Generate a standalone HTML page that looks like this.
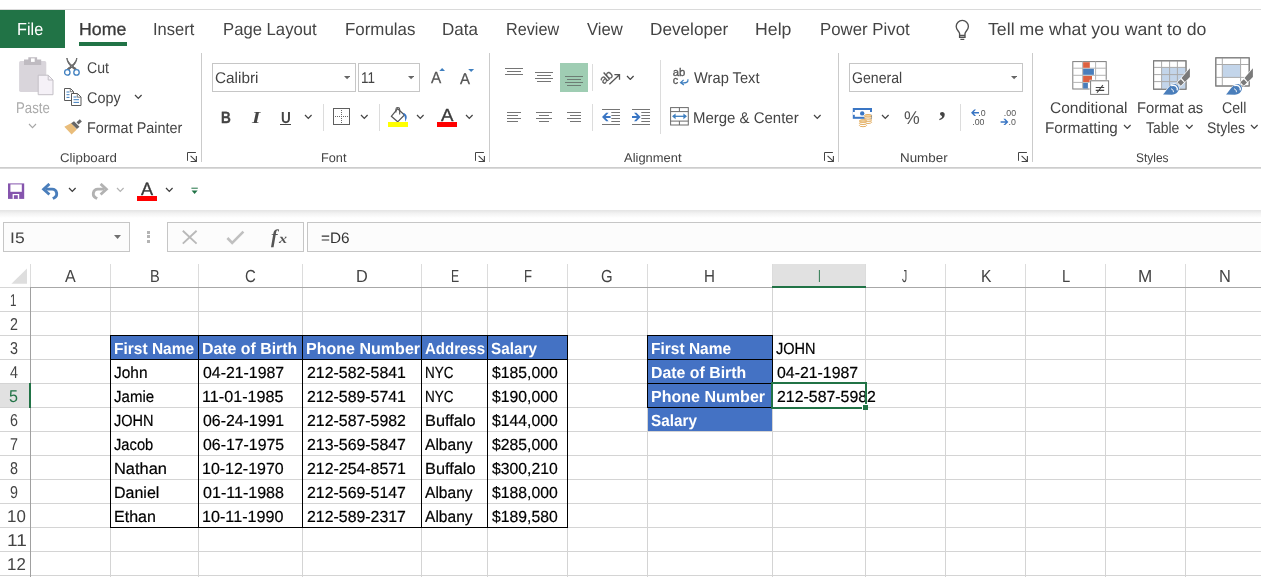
<!DOCTYPE html>
<html><head><meta charset="utf-8"><title>Excel</title>
<style>
html,body{margin:0;padding:0;background:#fff;}
body{width:1261px;height:577px;overflow:hidden;position:relative;font-family:"Liberation Sans", sans-serif;}
#app{position:absolute;left:0;top:0;width:1261px;height:577px;will-change:transform;}
.r{position:absolute;box-sizing:content-box;display:block;}
.t{position:absolute;white-space:pre;line-height:20px;transform-origin:0 0;font-family:"Liberation Sans", sans-serif;}
</style></head><body><div id="app">
<div class="r" style="left:0px;top:9px;width:1261px;height:1px;background:#dadada;"></div>
<div class="r" style="left:0px;top:10px;width:65px;height:38px;background:#217346;"></div>
<span class="t" style="left:17.47px;top:19.00px;font-size:17.4px;color:#fff;transform:scaleX(0.9346) skewX(0.05deg);">File</span>
<span class="t" style="left:78.88px;top:19.00px;font-size:17.4px;color:#3a3a3a;transform:scaleX(1.0200) skewX(0.05deg);-webkit-text-stroke:0.3px #3a3a3a;">Home</span>
<div class="r" style="left:79px;top:42px;width:48px;height:4px;background:#217346;"></div>
<span class="t" style="left:153.15px;top:19.00px;font-size:17.4px;color:#444;transform:scaleX(0.9488) skewX(0.05deg);">Insert</span>
<span class="t" style="left:223.14px;top:19.00px;font-size:17.4px;color:#444;transform:scaleX(0.9588) skewX(0.05deg);">Page Layout</span>
<span class="t" style="left:344.53px;top:19.00px;font-size:17.4px;color:#444;transform:scaleX(0.9704) skewX(0.05deg);">Formulas</span>
<span class="t" style="left:441.52px;top:19.00px;font-size:17.4px;color:#444;transform:scaleX(0.9778) skewX(0.05deg);">Data</span>
<span class="t" style="left:505.57px;top:19.00px;font-size:17.4px;color:#444;transform:scaleX(0.9321) skewX(0.05deg);">Review</span>
<span class="t" style="left:587.30px;top:19.00px;font-size:17.4px;color:#444;transform:scaleX(0.9579) skewX(0.05deg);">View</span>
<span class="t" style="left:650.11px;top:19.00px;font-size:17.4px;color:#444;transform:scaleX(0.9872) skewX(0.05deg);">Developer</span>
<span class="t" style="left:755.48px;top:19.00px;font-size:17.4px;color:#444;transform:scaleX(1.0176) skewX(0.05deg);">Help</span>
<span class="t" style="left:819.53px;top:19.00px;font-size:17.4px;color:#444;transform:scaleX(0.9663) skewX(0.05deg);">Power Pivot</span>
<span class="t" style="left:988.20px;top:19.00px;font-size:17.4px;color:#444;transform:scaleX(1.0173) skewX(0.05deg);">Tell me what you want to do</span>
<svg class="r" style="left:953px;top:19px" width="20" height="23" viewBox="0 0 20 23"><path d="M6.6 14.6 C6.4 12.4 3.2 11 3.2 7.5 A6.1 6.1 0 0 1 15.4 7.5 C15.4 11 12.2 12.4 12 14.6 M6.6 14.4 V18.2 H12 V14.4 M6.6 16.4 H12" fill="none" stroke="#505050" stroke-width="1.35"/><path d="M7.4 20.4 H11.3" stroke="#505050" stroke-width="1.2"/></svg>
<div class="r" style="left:201px;top:53px;width:1px;height:109px;background:#cbcbcb;"></div>
<div class="r" style="left:489px;top:53px;width:1px;height:109px;background:#cbcbcb;"></div>
<div class="r" style="left:838px;top:53px;width:1px;height:109px;background:#cbcbcb;"></div>
<div class="r" style="left:1032px;top:53px;width:1px;height:109px;background:#cbcbcb;"></div>
<div class="r" style="left:0px;top:167px;width:1261px;height:1px;background:#cdcdcd;"></div>
<div class="r" style="left:0px;top:168px;width:1261px;height:1px;background:#dadada;"></div>
<div class="r" style="left:323px;top:104px;width:1px;height:27px;background:#dcdcdc;"></div>
<div class="r" style="left:379px;top:104px;width:1px;height:27px;background:#dcdcdc;"></div>
<div class="r" style="left:592px;top:64px;width:1px;height:27px;background:#dcdcdc;"></div>
<div class="r" style="left:592px;top:104px;width:1px;height:27px;background:#dcdcdc;"></div>
<div class="r" style="left:660px;top:60px;width:1px;height:74px;background:#dcdcdc;"></div>
<div class="r" style="left:960px;top:104px;width:1px;height:27px;background:#dcdcdc;"></div>
<svg class="r" style="left:18px;top:56px" width="37" height="40" viewBox="0 0 37 40"><rect x="1.1" y="5.1" width="27.2" height="30.8" rx="1.6" fill="#d9d5db"/>
<path d="M6 3.6 H10.3 V1.3 H19.1 V3.6 H23.2 V9 H6z" fill="#bfbbc1"/><rect x="13" y="2.4" width="3.7" height="3.5" fill="#fff"/>
<path d="M20.2 19.2 h10 l4.8 4.8 v14.7 h-14.8z" fill="#f5f1f7" stroke="#c3bfc6" stroke-width="1"/><path d="M30.2 19.2 v4.8 h4.8" fill="none" stroke="#c3bfc6"/></svg>
<span class="t" style="left:16.05px;top:98.00px;font-size:15.5px;color:#ababab;transform:scaleX(0.8526) skewX(0.05deg);">Paste</span>
<svg class="r" style="left:28.3px;top:123.3px" width="9" height="6" viewBox="0 0 9 6"><path d="M1 1 L4.5 4.7 L8 1" fill="none" stroke="#a6a6a6" stroke-width="1.1"/></svg>
<svg class="r" style="left:63px;top:57px" width="19" height="20" viewBox="0 0 19 20"><path d="M3.9 1 C4.6 4.5 7.5 8 13.2 11.6 L11.6 12.6 C7 9 4 5.5 3.9 1z M13.8 1 C13.1 4.5 10.2 8 4.5 11.6 L6.1 12.6 C10.7 9 13.7 5.5 13.8 1z" fill="#666" stroke="#666" stroke-width="1"/>
<circle cx="4.3" cy="15.4" r="2.7" fill="none" stroke="#3f7fbf" stroke-width="1.3"/><circle cx="13.5" cy="15.4" r="2.7" fill="none" stroke="#3f7fbf" stroke-width="1.3"/></svg>
<span class="t" style="left:87.20px;top:58.00px;font-size:15.5px;color:#444;transform:scaleX(0.9083) skewX(0.05deg);">Cut</span>
<svg class="r" style="left:63px;top:87px" width="19" height="20" viewBox="0 0 19 20"><path d="M8 13.5 H1.5 V1.5 H7.5 L10.5 4.5 V6.5" fill="none" stroke="#5a5a5a" stroke-width="1"/><path d="M7.3 1.7 V4.7 H10.3" fill="none" stroke="#5a5a5a" stroke-width="0.8"/>
<path d="M3.5 5h3 M3.5 7.7h3 M3.5 10.4h3" stroke="#3f7fbf" stroke-width="1"/>
<path d="M8.5 6.5 h6 l3.5 3.5 v8.5 h-9.5z" fill="#fff" stroke="#5a5a5a" stroke-width="1"/><path d="M14.3 6.7 v3.5 h3.5" fill="none" stroke="#5a5a5a" stroke-width="0.8"/>
<path d="M10.5 10h3 M10.5 12.7h5.5 M10.5 15.4h5.5" stroke="#3f7fbf" stroke-width="1"/></svg>
<span class="t" style="left:87.20px;top:88.00px;font-size:15.5px;color:#444;transform:scaleX(0.9278) skewX(0.05deg);">Copy</span>
<svg class="r" style="left:134.3px;top:94.3px" width="8.6" height="5.7" viewBox="0 0 8.6 5.7"><path d="M1 1 L4.3 4.4 L7.6 1" fill="none" stroke="#444" stroke-width="1.25"/></svg>
<svg class="r" style="left:63px;top:117px" width="20" height="19" viewBox="0 0 20 19"><path d="M1.3 9.7 L8.4 5.9 L13.8 12.4 L8.6 17.6 Z" fill="#e9bd7b"/><path d="M8.1 6.3 L11 4.2 L16.5 9.7 L13.9 12z" fill="#666"/>
<path d="M13.5 5.2 L16.8 2.3 L18.9 4.4 L15.5 7.4z" fill="#666"/></svg>
<span class="t" style="left:86.77px;top:118.00px;font-size:15.5px;color:#444;transform:scaleX(0.9294) skewX(0.05deg);">Format Painter</span>
<span class="t" style="left:59.50px;top:148.00px;font-size:12.6px;color:#444;transform:scaleX(1.0556) skewX(0.05deg);">Clipboard</span>
<svg class="r" style="left:187px;top:152px" width="11" height="11" viewBox="0 0 11 11"><path d="M0.5 8.8 V0.5 H8.9" fill="none" stroke="#444" stroke-width="1"/><path d="M3.6 3.8 L9.3 9.3 M9.4 4 V9.5 H3.6" fill="none" stroke="#444" stroke-width="1.1"/></svg>
<div class="r" style="left:212px;top:63px;width:141.5px;height:27px;background:#fff;border:1px solid #c6c6c6;"></div>
<div class="r" style="left:358px;top:63px;width:59.5px;height:27px;background:#fff;border:1px solid #c6c6c6;"></div>
<span class="t" style="left:214.50px;top:68.00px;font-size:15.5px;color:#444;transform:scaleX(0.9884) skewX(0.05deg);">Calibri</span>
<span class="t" style="left:361.13px;top:68.00px;font-size:15.5px;color:#444;transform:scaleX(0.8667) skewX(0.05deg);">11</span>
<svg class="r" style="left:343.6px;top:76.2px" width="6.2" height="4.3" viewBox="0 0 6.2 4.3"><path d="M0 0 H6.2 L3.1 3.3 Z" fill="#666"/></svg>
<svg class="r" style="left:407.9px;top:76.2px" width="6.2" height="4.3" viewBox="0 0 6.2 4.3"><path d="M0 0 H6.2 L3.1 3.3 Z" fill="#666"/></svg>
<span class="t" style="left:431.10px;top:67.00px;font-size:16.1px;color:#555;transform:scaleX(0.9545) skewX(0.05deg);-webkit-text-stroke:0.25px #555;">A</span>
<svg class="r" style="left:439px;top:67px" width="7" height="5" viewBox="0 0 7 5"><path d="M0.3 3.9 L3.15 0.9 L6 3.9z" fill="#3f7fbf"/></svg>
<span class="t" style="left:460.10px;top:69.00px;font-size:15.5px;color:#555;transform:scaleX(0.9636) skewX(0.05deg);-webkit-text-stroke:0.25px #555;">A</span>
<svg class="r" style="left:468px;top:68px" width="7" height="5" viewBox="0 0 7 5"><path d="M0.2 1 H6.1 L3.15 3.9z" fill="#3f7fbf"/></svg>
<span class="t" style="left:220.70px;top:107.00px;font-size:16.3px;color:#444;transform:scaleX(0.8364) skewX(0.05deg);font-weight:bold;-webkit-text-stroke:0.3px #444;">B</span>
<span class="t" style="left:252.00px;top:108.00px;font-size:16.8px;color:#444;transform:scaleX(1.2714) skewX(0.05deg);font-weight:bold;font-style:italic;font-family:'Liberation Serif',serif;">I</span>
<span class="t" style="left:280.80px;top:108.00px;font-size:16px;color:#444;transform:scaleX(0.8455) skewX(0.05deg);font-weight:bold;">U</span>
<div class="r" style="left:280px;top:124px;width:11px;height:1.1px;background:#444;"></div>
<svg class="r" style="left:303.8px;top:114.3px" width="8.6" height="5.7" viewBox="0 0 8.6 5.7"><path d="M1 1 L4.3 4.4 L7.6 1" fill="none" stroke="#444" stroke-width="1.25"/></svg>
<svg class="r" style="left:333px;top:108px" width="18" height="18" viewBox="0 0 18 18"><rect x="0.5" y="0.5" width="16" height="16" fill="#fff" stroke="#5e5e5e" stroke-width="1"/><path d="M8.5 2 V16 M2 8.5 H16" stroke="#666" stroke-width="1" stroke-dasharray="1 1"/></svg>
<svg class="r" style="left:360.3px;top:114.3px" width="8.6" height="5.7" viewBox="0 0 8.6 5.7"><path d="M1 1 L4.3 4.4 L7.6 1" fill="none" stroke="#444" stroke-width="1.25"/></svg>
<svg class="r" style="left:388px;top:105px" width="22" height="17" viewBox="0 0 22 17"><path d="M3.3 11.3 L9.7 3.7 L16.4 10 L9.7 16.8 Z" fill="#fff" stroke="#555" stroke-width="1.2" stroke-linejoin="round"/>
<path d="M7.9 7.5 V4.4 a1.9 1.9 0 0 1 3.8 0 V9.5" fill="none" stroke="#555" stroke-width="1.1"/>
<path d="M14.5 7.8 c3 0.3 4.6 2.5 4.2 5 c-0.3 1.6 -1 3 -1.6 4 c0.3 -4 -0.6 -6.8 -2.6 -9z" fill="#3a76c4"/></svg>
<div class="r" style="left:388px;top:122px;width:20px;height:4.8px;background:#ffff00;"></div>
<svg class="r" style="left:415.8px;top:114.3px" width="8.6" height="5.7" viewBox="0 0 8.6 5.7"><path d="M1 1 L4.3 4.4 L7.6 1" fill="none" stroke="#444" stroke-width="1.25"/></svg>
<span class="t" style="left:440.50px;top:105.00px;font-size:17.6px;color:#3a3a3a;transform:scaleX(1.0583) skewX(0.05deg);-webkit-text-stroke:0.35px #3a3a3a;">A</span>
<div class="r" style="left:437px;top:122px;width:20px;height:4.8px;background:#ff0000;"></div>
<svg class="r" style="left:465.3px;top:114.3px" width="8.6" height="5.7" viewBox="0 0 8.6 5.7"><path d="M1 1 L4.3 4.4 L7.6 1" fill="none" stroke="#444" stroke-width="1.25"/></svg>
<span class="t" style="left:320.99px;top:148.00px;font-size:12.6px;color:#444;transform:scaleX(1.0104) skewX(0.05deg);">Font</span>
<svg class="r" style="left:475px;top:152px" width="11" height="11" viewBox="0 0 11 11"><path d="M0.5 8.8 V0.5 H8.9" fill="none" stroke="#444" stroke-width="1"/><path d="M3.6 3.8 L9.3 9.3 M9.4 4 V9.5 H3.6" fill="none" stroke="#444" stroke-width="1.1"/></svg>
<svg class="r" style="left:505px;top:68px" width="24" height="24" viewBox="0 0 24 24"><rect x="0" y="0" width="18" height="1" fill="#757575"/><rect x="2" y="3" width="14" height="1" fill="#757575"/><rect x="0" y="6" width="18" height="1" fill="#757575"/></svg>
<svg class="r" style="left:535px;top:72px" width="24" height="24" viewBox="0 0 24 24"><rect x="0" y="0" width="18" height="1" fill="#757575"/><rect x="2" y="3" width="14" height="1" fill="#757575"/><rect x="0" y="6" width="18" height="1" fill="#757575"/><rect x="2" y="9" width="14" height="1" fill="#757575"/></svg>
<div class="r" style="left:560px;top:63px;width:28px;height:29px;background:#9fcdb3;"></div>
<svg class="r" style="left:565px;top:76px" width="24" height="24" viewBox="0 0 24 24"><rect x="0" y="0" width="18" height="1" fill="#6d7d74"/><rect x="2" y="3" width="14" height="1" fill="#6d7d74"/><rect x="0" y="6" width="18" height="1" fill="#6d7d74"/><rect x="2" y="9" width="14" height="1" fill="#6d7d74"/></svg>
<svg class="r" style="left:507px;top:112px" width="24" height="24" viewBox="0 0 24 24"><rect x="0" y="0" width="14" height="1" fill="#757575"/><rect x="0" y="3" width="11" height="1" fill="#757575"/><rect x="0" y="6" width="14" height="1" fill="#757575"/><rect x="0" y="9" width="11" height="1" fill="#757575"/></svg>
<svg class="r" style="left:536px;top:112px" width="24" height="24" viewBox="0 0 24 24"><rect x="0" y="0" width="16" height="1" fill="#757575"/><rect x="3" y="3" width="10" height="1" fill="#757575"/><rect x="0" y="6" width="16" height="1" fill="#757575"/><rect x="3" y="9" width="10" height="1" fill="#757575"/></svg>
<svg class="r" style="left:567px;top:112px" width="24" height="24" viewBox="0 0 24 24"><rect x="0" y="0" width="14" height="1" fill="#757575"/><rect x="3" y="3" width="11" height="1" fill="#757575"/><rect x="0" y="6" width="14" height="1" fill="#757575"/><rect x="3" y="9" width="11" height="1" fill="#757575"/></svg>
<svg class="r" style="left:598px;top:64px" width="24" height="24" viewBox="0 0 24 24"><g transform="rotate(-42 8.5 13.5)"><text x="1.5" y="17" font-family="Liberation Sans,sans-serif" font-size="12.5" fill="#555" stroke="#555" stroke-width="0.25">ab</text></g>
<path d="M11.4 20.3 L21.2 11 M16.4 10.7 H21.5 V15.8" fill="none" stroke="#555" stroke-width="1.3"/></svg>
<svg class="r" style="left:626.0999999999999px;top:74.8px" width="8.6" height="5.7" viewBox="0 0 8.6 5.7"><path d="M1 1 L4.3 4.4 L7.6 1" fill="none" stroke="#444" stroke-width="1.25"/></svg>
<svg class="r" style="left:671px;top:66px" width="20" height="21" viewBox="0 0 20 21"><text x="1.8" y="10.4" font-family="Liberation Sans,sans-serif" font-size="11" fill="#555" stroke="#555" stroke-width="0.3" textLength="12.6" lengthAdjust="spacingAndGlyphs">ab</text>
<text x="1.8" y="18.3" font-family="Liberation Sans,sans-serif" font-size="11" fill="#555" stroke="#555" stroke-width="0.3">c</text>
<path d="M17 13.2 c0.3 3.2 -1.8 4.2 -7 3.6 M12.6 13.9 L9.6 16.7 L12.9 19" fill="none" stroke="#3f7fbf" stroke-width="1.25"/></svg>
<span class="t" style="left:693.75px;top:68.00px;font-size:15.5px;color:#444;transform:scaleX(0.9464) skewX(0.05deg);">Wrap Text</span>
<svg class="r" style="left:602px;top:109px" width="19" height="17" viewBox="0 0 19 17"><path d="M0 0.5 H18 M9.3 3.5 H18 M9.3 6.5 H18 M9.3 9.5 H18 M9.3 12.5 H18 M0 15.5 H18" stroke="#757575" stroke-width="1"/>
<path d="M0 8 L4.2 3.8 H6.6 L3.7 7 H8.6 V9 H3.7 L6.6 12.2 H4.2z" fill="#3a76c4"/></svg>
<svg class="r" style="left:632px;top:109px" width="19" height="17" viewBox="0 0 19 17"><path d="M0 0.5 H18 M9.3 3.5 H18 M9.3 6.5 H18 M9.3 9.5 H18 M9.3 12.5 H18 M0 15.5 H18" stroke="#757575" stroke-width="1"/>
<path d="M8.6 8 L4.4 3.8 H2 L4.9 7 H0 V9 H4.9 L2 12.2 H4.4z" fill="#3a76c4"/></svg>
<svg class="r" style="left:669px;top:106px" width="22" height="21" viewBox="0 0 22 21"><rect x="1.6" y="1.6" width="17.7" height="17.4" fill="#fff" stroke="#6a6a6a"/><path d="M1.6 5.6 H19.3 M1.6 15.1 H19.3 M10.4 1.6 V5.6 M10.4 15.1 V19" stroke="#6a6a6a" fill="none"/>
<path d="M4.5 10.3 H16.5" stroke="#3f7fbf" stroke-width="1.3" fill="none"/><path d="M3 10.3 L6.6 7.4 V13.2z M18 10.3 L14.4 7.4 V13.2z" fill="#3f7fbf"/></svg>
<span class="t" style="left:693.28px;top:108.00px;font-size:15.5px;color:#444;transform:scaleX(0.9656) skewX(0.05deg);">Merge &amp; Center</span>
<svg class="r" style="left:813.0999999999999px;top:114.3px" width="8.6" height="5.7" viewBox="0 0 8.6 5.7"><path d="M1 1 L4.3 4.4 L7.6 1" fill="none" stroke="#444" stroke-width="1.25"/></svg>
<span class="t" style="left:623.75px;top:148.00px;font-size:12.6px;color:#444;transform:scaleX(1.0268) skewX(0.05deg);">Alignment</span>
<svg class="r" style="left:824px;top:152px" width="11" height="11" viewBox="0 0 11 11"><path d="M0.5 8.8 V0.5 H8.9" fill="none" stroke="#444" stroke-width="1"/><path d="M3.6 3.8 L9.3 9.3 M9.4 4 V9.5 H3.6" fill="none" stroke="#444" stroke-width="1.1"/></svg>
<div class="r" style="left:849px;top:63px;width:172px;height:27px;background:#fff;border:1px solid #c6c6c6;"></div>
<span class="t" style="left:852.00px;top:68.00px;font-size:15.5px;color:#444;transform:scaleX(0.9091) skewX(0.05deg);">General</span>
<svg class="r" style="left:1010.8px;top:76.2px" width="6.2" height="4.3" viewBox="0 0 6.2 4.3"><path d="M0 0 H6.2 L3.1 3.3 Z" fill="#666"/></svg>
<svg class="r" style="left:852px;top:107px" width="22" height="21" viewBox="0 0 22 21"><rect x="1.8" y="2" width="17.2" height="8.8" fill="#fff" stroke="#3a76c4" stroke-width="2"/><circle cx="10.2" cy="6.4" r="2.2" fill="#3a76c4"/><rect x="1" y="5" width="2" height="2.8" fill="#fff"/><rect x="18" y="5" width="2" height="2.8" fill="#fff"/>
<g fill="#fff" stroke="#e2ad62" stroke-width="1"><ellipse cx="16" cy="15.2" rx="3.6" ry="1.3"/><ellipse cx="16" cy="13" rx="3.6" ry="1.3"/><ellipse cx="16" cy="10.8" rx="3.6" ry="1.3"/><ellipse cx="16" cy="8.8" rx="3.6" ry="1.3" fill="#f3d6a6"/>
<ellipse cx="11" cy="18.4" rx="3.6" ry="1.3"/><ellipse cx="11" cy="16.2" rx="3.6" ry="1.3"/><ellipse cx="11" cy="14" rx="3.6" ry="1.3" fill="#f3d6a6"/></g></svg>
<svg class="r" style="left:881.0999999999999px;top:114.3px" width="8.6" height="5.7" viewBox="0 0 8.6 5.7"><path d="M1 1 L4.3 4.4 L7.6 1" fill="none" stroke="#444" stroke-width="1.25"/></svg>
<span class="t" style="left:904.00px;top:108.00px;font-size:18.5px;color:#555;transform:scaleX(0.9562) skewX(0.05deg);">%</span>
<span class="t" style="left:938.70px;top:97.00px;font-size:27px;color:#444;transform:scaleX(1.0000) skewX(0.05deg);font-weight:bold;font-family:'Liberation Serif',serif;">,</span>
<svg class="r" style="left:970px;top:108px" width="18" height="18" viewBox="0 0 18 18"><text x="8.3" y="8" font-family="Liberation Sans,sans-serif" font-size="8.8" fill="#555">.0</text><text x="2.2" y="16.8" font-family="Liberation Sans,sans-serif" font-size="8.8" fill="#555">.00</text>
<path d="M1 4.7 L4.2 1.6 H6 L3.8 4 H9 V5.5 H3.8 L6 7.9 H4.2z" fill="#3a76c4"/></svg>
<svg class="r" style="left:999px;top:108px" width="18" height="18" viewBox="0 0 18 18"><text x="4.8" y="8" font-family="Liberation Sans,sans-serif" font-size="8.8" fill="#555">.00</text><text x="9.5" y="16.8" font-family="Liberation Sans,sans-serif" font-size="8.8" fill="#555">.0</text>
<path d="M9.4 13.9 L6.2 10.8 H4.4 L6.6 13.2 H1.6 V14.7 H6.6 L4.4 17.1 H6.2z" fill="#3a76c4"/></svg>
<span class="t" style="left:900.19px;top:148.00px;font-size:12.6px;color:#444;transform:scaleX(1.0625) skewX(0.05deg);">Number</span>
<svg class="r" style="left:1018px;top:152px" width="11" height="11" viewBox="0 0 11 11"><path d="M0.5 8.8 V0.5 H8.9" fill="none" stroke="#444" stroke-width="1"/><path d="M3.6 3.8 L9.3 9.3 M9.4 4 V9.5 H3.6" fill="none" stroke="#444" stroke-width="1.1"/></svg>
<svg class="r" style="left:1071px;top:60px" width="40" height="36" viewBox="0 0 40 36"><rect x="1.8" y="1.6" width="33.4" height="27.4" fill="#fff" stroke="#7d7d7d"/>
<path d="M1.8 8.2 H35 M1.8 15.3 H35 M1.8 22.4 H35 M11.6 1.6 V29 M24.6 1.6 V29" stroke="#b5b5b5" fill="none"/>
<rect x="12.1" y="2.2" width="6.7" height="5.6" fill="#dd6140"/><rect x="12.1" y="8.8" width="10.8" height="6" fill="#4a7ebb"/><rect x="12.1" y="16" width="8.9" height="6" fill="#dd6140"/><rect x="12.1" y="23" width="4.8" height="5.5" fill="#4a7ebb"/>
<rect x="18.6" y="19.8" width="20" height="15.6" fill="#fff"/><rect x="19.6" y="20.8" width="18" height="13.6" fill="#fff" stroke="#7d7d7d"/>
<text x="23.2" y="33" font-family="DejaVu Sans,sans-serif" font-size="13.5" fill="#444">≠</text></svg>
<span class="t" style="left:1050.00px;top:98.00px;font-size:15.5px;color:#444;transform:scaleX(1.0000) skewX(0.05deg);">Conditional</span>
<span class="t" style="left:1044.77px;top:118.00px;font-size:15.5px;color:#444;transform:scaleX(0.9829) skewX(0.05deg);">Formatting</span>
<svg class="r" style="left:1123.1px;top:123.8px" width="8.6" height="5.7" viewBox="0 0 8.6 5.7"><path d="M1 1 L4.3 4.4 L7.6 1" fill="none" stroke="#444" stroke-width="1.25"/></svg>
<svg class="r" style="left:1140px;top:52px" width="60" height="48" viewBox="0 0 60 48"><rect x="13.6" y="8.8" width="32.4" height="28.4" fill="#fff" stroke="#7d7d7d"/>
<rect x="21.6" y="15.4" width="24" height="21.4" fill="#c3d5ea"/>
<path d="M13.6 15.4 H46 M13.6 22.6 H46 M13.6 29.6 H46 M21.6 8.8 V37.2 M29.6 8.8 V37.2 M37.4 8.8 V37.2" stroke="#aaa" fill="none"/>
<rect x="13.6" y="8.8" width="32.4" height="28.4" fill="none" stroke="#7d7d7d"/><g transform="translate(0 0)"><path d="M41.5 25.9 L49.9 16.3 V25.1 L44.9 29.9z M40.8 27.2 L44 30.5 L40.8 33.8 L37.4 30.2z" fill="#7a7a7a" stroke="#fff" stroke-width="1.2" paint-order="stroke"/>
<path d="M23 42.6 C27 38 29 33.5 33.1 32.2 C36.5 31.4 39.3 34 38.9 37 C38.4 40.5 35 42.8 31.7 42.7z" fill="#4a7ebb" stroke="#fff" stroke-width="1.2" paint-order="stroke"/>
<path d="M31.2 33.6 C35.2 32.3 38 35.2 37.2 38.4" fill="none" stroke="#fff" stroke-width="1.3"/><path d="M31 36.8 c1.6 0.4 2.6 1.6 2.4 3.4" fill="none" stroke="#fff" stroke-width="0.9"/></g></svg>
<span class="t" style="left:1136.55px;top:98.00px;font-size:15.5px;color:#444;transform:scaleX(0.9485) skewX(0.05deg);">Format as</span>
<span class="t" style="left:1146.25px;top:118.00px;font-size:15.5px;color:#444;transform:scaleX(0.8986) skewX(0.05deg);">Table</span>
<svg class="r" style="left:1185.1px;top:123.8px" width="8.6" height="5.7" viewBox="0 0 8.6 5.7"><path d="M1 1 L4.3 4.4 L7.6 1" fill="none" stroke="#444" stroke-width="1.25"/></svg>
<svg class="r" style="left:1203px;top:52px" width="58" height="48" viewBox="0 0 58 48"><rect x="12.8" y="5.8" width="33.4" height="28.2" fill="#fff" stroke="#7d7d7d"/>
<rect x="19.3" y="12.5" width="18.3" height="12.9" fill="#c3d5ea"/>
<path d="M12.8 12.5 H46.2 M12.8 25.4 H46.2 M19.3 5.8 V34 M37.6 5.8 V34" stroke="#aaa" fill="none"/>
<rect x="12.8" y="5.8" width="33.4" height="28.2" fill="none" stroke="#7d7d7d"/><g transform="translate(0 0)"><path d="M41.5 25.9 L49.9 16.3 V25.1 L44.9 29.9z M40.8 27.2 L44 30.5 L40.8 33.8 L37.4 30.2z" fill="#7a7a7a" stroke="#fff" stroke-width="1.2" paint-order="stroke"/>
<path d="M23 42.6 C27 38 29 33.5 33.1 32.2 C36.5 31.4 39.3 34 38.9 37 C38.4 40.5 35 42.8 31.7 42.7z" fill="#4a7ebb" stroke="#fff" stroke-width="1.2" paint-order="stroke"/>
<path d="M31.2 33.6 C35.2 32.3 38 35.2 37.2 38.4" fill="none" stroke="#fff" stroke-width="1.3"/><path d="M31 36.8 c1.6 0.4 2.6 1.6 2.4 3.4" fill="none" stroke="#fff" stroke-width="0.9"/></g></svg>
<span class="t" style="left:1222.00px;top:98.00px;font-size:15.5px;color:#444;transform:scaleX(0.9135) skewX(0.05deg);">Cell</span>
<span class="t" style="left:1207.10px;top:118.00px;font-size:15.5px;color:#444;transform:scaleX(0.9024) skewX(0.05deg);">Styles</span>
<svg class="r" style="left:1250.1px;top:123.8px" width="8.6" height="5.7" viewBox="0 0 8.6 5.7"><path d="M1 1 L4.3 4.4 L7.6 1" fill="none" stroke="#444" stroke-width="1.25"/></svg>
<span class="t" style="left:1135.75px;top:148.00px;font-size:12.6px;color:#444;transform:scaleX(0.9485) skewX(0.05deg);">Styles</span>
<svg class="r" style="left:7px;top:183px" width="18" height="17" viewBox="0 0 18 17"><path d="M1 0.4 H17.2 V15.9 H1z" fill="#8554ad"/><rect x="3.4" y="1.4" width="11.4" height="7.4" fill="#fff"/><rect x="5.6" y="11" width="6.6" height="4.9" fill="#fff"/><rect x="6.9" y="12.2" width="3.9" height="3.7" fill="#8554ad"/></svg>
<svg class="r" style="left:41px;top:183px" width="20" height="17" viewBox="0 0 20 17"><g transform=""><path d="M5 6.2 H11.2 a4.6 4.6 0 0 1 2.2 8.6 L11.8 15.6" fill="none" stroke="#4a7ebb" stroke-width="2.8"/><path d="M8.4 0.9 L2.6 6.2 L8.4 11.5" fill="none" stroke="#4a7ebb" stroke-width="2.8"/></g></svg>
<svg class="r" style="left:68.1px;top:186.9px" width="8.6" height="5.7" viewBox="0 0 8.6 5.7"><path d="M1 1 L4.3 4.4 L7.6 1" fill="none" stroke="#3b3b3b" stroke-width="1.25"/></svg>
<svg class="r" style="left:89px;top:183px" width="20" height="17" viewBox="0 0 20 17"><g transform="translate(20 0) scale(-1 1)"><path d="M5 6.2 H11.2 a4.6 4.6 0 0 1 2.2 8.6 L11.8 15.6" fill="none" stroke="#b2b2b2" stroke-width="2.8"/><path d="M8.4 0.9 L2.6 6.2 L8.4 11.5" fill="none" stroke="#b2b2b2" stroke-width="2.8"/></g></svg>
<svg class="r" style="left:116.2px;top:186.9px" width="8.6" height="5.7" viewBox="0 0 8.6 5.7"><path d="M1 1 L4.3 4.4 L7.6 1" fill="none" stroke="#b4b4b4" stroke-width="1.25"/></svg>
<span class="t" style="left:140.80px;top:179.00px;font-size:17.8px;color:#3a3a3a;transform:scaleX(1.0167) skewX(0.05deg);-webkit-text-stroke:0.35px #3a3a3a;">A</span>
<div class="r" style="left:137px;top:196px;width:20px;height:4.8px;background:#ff0000;"></div>
<svg class="r" style="left:164.5px;top:186.9px" width="8.6" height="5.7" viewBox="0 0 8.6 5.7"><path d="M1 1 L4.3 4.4 L7.6 1" fill="none" stroke="#3b3b3b" stroke-width="1.25"/></svg>
<svg class="r" style="left:191px;top:187px" width="8" height="8" viewBox="0 0 8 8"><path d="M0.4 1.2 H6.8" stroke="#217346" stroke-width="1"/><path d="M0.6 3.4 H6.6 L3.6 7z" fill="#217346"/></svg>
<div class="r" style="left:0;top:210px;width:1261px;height:8px;background:linear-gradient(#e4e4e4,#f3f3f3 45%,#fff)"></div>
<div class="r" style="left:3px;top:222px;width:124.6px;height:27.6px;background:#fcfcfc;border:1px solid #c6c6c6;"></div>
<span class="t" style="left:9.55px;top:228.00px;font-size:15.2px;color:#444;transform:scaleX(1.1545) skewX(0.05deg);">I5</span>
<svg class="r" style="left:114.2px;top:235px" width="7.1" height="5" viewBox="0 0 7.1 5"><path d="M0 0 H7.1 L3.55 4 Z" fill="#707070"/></svg>
<div class="r" style="left:147px;top:230.5px;width:3px;height:3px;background:#b4b4b4;"></div>
<div class="r" style="left:147px;top:235px;width:3px;height:3px;background:#b4b4b4;"></div>
<div class="r" style="left:147px;top:239.5px;width:3px;height:3px;background:#b4b4b4;"></div>
<div class="r" style="left:167px;top:222px;width:134.8px;height:27.6px;background:#fcfcfc;border:1px solid #c6c6c6;"></div>
<svg class="r" style="left:181px;top:229px" width="18" height="17" viewBox="0 0 18 17"><path d="M1.8 1.8 L15.6 14.6 M15.6 1.8 L1.8 14.6" stroke="#b9b9b9" stroke-width="1.9" fill="none"/></svg>
<svg class="r" style="left:225px;top:229px" width="21" height="17" viewBox="0 0 21 17"><path d="M2.4 9 L7.2 14 L18.4 2.6" stroke="#c0c0c0" stroke-width="2.6" fill="none"/></svg>
<span class="t" style="left:271.40px;top:227.00px;font-size:19.5px;color:#555;transform:scaleX(1.0000) skewX(0.05deg);font-weight:bold;font-style:italic;font-family:'Liberation Serif',serif;">f</span>
<span class="t" style="left:278.80px;top:229.00px;font-size:13.5px;color:#555;transform:scaleX(1.2000) skewX(0.05deg);font-weight:bold;font-style:italic;font-family:'Liberation Serif',serif;">x</span>
<div class="r" style="left:307px;top:222px;width:960px;height:27.6px;background:#fcfcfc;border:1px solid #c6c6c6;"></div>
<span class="t" style="left:321.30px;top:228.00px;font-size:15.1px;color:#333;transform:scaleX(1.0179) skewX(0.05deg);">=D6</span>
<div class="r" style="left:772px;top:264px;width:94px;height:23px;background:#e1e1e1;"></div>
<div class="r" style="left:0px;top:384px;width:29px;height:23px;background:#e1e1e1;"></div>
<span class="t" style="left:64.95px;top:266.00px;font-size:17.4px;color:#444;transform:scaleX(0.9250) skewX(0.05deg);">A</span>
<span class="t" style="left:150.21px;top:266.00px;font-size:17.4px;color:#444;transform:scaleX(0.8400) skewX(0.05deg);">B</span>
<span class="t" style="left:244.69px;top:266.00px;font-size:17.4px;color:#444;transform:scaleX(0.8636) skewX(0.05deg);">C</span>
<span class="t" style="left:356.41px;top:266.00px;font-size:17.4px;color:#444;transform:scaleX(0.9364) skewX(0.05deg);">D</span>
<span class="t" style="left:451.00px;top:266.00px;font-size:17.4px;color:#444;transform:scaleX(0.7000) skewX(0.05deg);">E</span>
<span class="t" style="left:524.04px;top:266.00px;font-size:17.4px;color:#444;transform:scaleX(0.7556) skewX(0.05deg);">F</span>
<span class="t" style="left:601.19px;top:266.00px;font-size:17.4px;color:#444;transform:scaleX(0.8583) skewX(0.05deg);">G</span>
<span class="t" style="left:704.33px;top:266.00px;font-size:17.4px;color:#444;transform:scaleX(0.8727) skewX(0.05deg);">H</span>
<span class="t" style="left:817.58px;top:266.00px;font-size:17.4px;color:#217346;transform:scaleX(0.5667) skewX(0.05deg);">I</span>
<span class="t" style="left:902.30px;top:266.00px;font-size:17.4px;color:#444;transform:scaleX(0.6000) skewX(0.05deg);">J</span>
<span class="t" style="left:981.00px;top:266.00px;font-size:17.4px;color:#444;transform:scaleX(0.9000) skewX(0.05deg);">K</span>
<span class="t" style="left:1061.95px;top:266.00px;font-size:17.4px;color:#444;transform:scaleX(0.8500) skewX(0.05deg);">L</span>
<span class="t" style="left:1138.02px;top:266.00px;font-size:17.4px;color:#444;transform:scaleX(0.9846) skewX(0.05deg);">M</span>
<span class="t" style="left:1219.35px;top:266.00px;font-size:17.4px;color:#444;transform:scaleX(0.9455) skewX(0.05deg);">N</span>
<div class="r" style="left:30px;top:264px;width:1px;height:23px;background:#dcdcdc;"></div>
<div class="r" style="left:110px;top:264px;width:1px;height:23px;background:#dcdcdc;"></div>
<div class="r" style="left:198px;top:264px;width:1px;height:23px;background:#dcdcdc;"></div>
<div class="r" style="left:302px;top:264px;width:1px;height:23px;background:#dcdcdc;"></div>
<div class="r" style="left:421px;top:264px;width:1px;height:23px;background:#dcdcdc;"></div>
<div class="r" style="left:487px;top:264px;width:1px;height:23px;background:#dcdcdc;"></div>
<div class="r" style="left:567px;top:264px;width:1px;height:23px;background:#dcdcdc;"></div>
<div class="r" style="left:647px;top:264px;width:1px;height:23px;background:#dcdcdc;"></div>
<div class="r" style="left:772px;top:264px;width:1px;height:23px;background:#dcdcdc;"></div>
<div class="r" style="left:865px;top:264px;width:1px;height:23px;background:#dcdcdc;"></div>
<div class="r" style="left:945px;top:264px;width:1px;height:23px;background:#dcdcdc;"></div>
<div class="r" style="left:1025px;top:264px;width:1px;height:23px;background:#dcdcdc;"></div>
<div class="r" style="left:1105px;top:264px;width:1px;height:23px;background:#dcdcdc;"></div>
<div class="r" style="left:1185px;top:264px;width:1px;height:23px;background:#dcdcdc;"></div>
<div class="r" style="left:30px;top:288px;width:1px;height:300px;background:#d4d4d4;"></div>
<div class="r" style="left:110px;top:288px;width:1px;height:300px;background:#d4d4d4;"></div>
<div class="r" style="left:198px;top:288px;width:1px;height:300px;background:#d4d4d4;"></div>
<div class="r" style="left:302px;top:288px;width:1px;height:300px;background:#d4d4d4;"></div>
<div class="r" style="left:421px;top:288px;width:1px;height:300px;background:#d4d4d4;"></div>
<div class="r" style="left:487px;top:288px;width:1px;height:300px;background:#d4d4d4;"></div>
<div class="r" style="left:567px;top:288px;width:1px;height:300px;background:#d4d4d4;"></div>
<div class="r" style="left:647px;top:288px;width:1px;height:300px;background:#d4d4d4;"></div>
<div class="r" style="left:772px;top:288px;width:1px;height:300px;background:#d4d4d4;"></div>
<div class="r" style="left:865px;top:288px;width:1px;height:300px;background:#d4d4d4;"></div>
<div class="r" style="left:945px;top:288px;width:1px;height:300px;background:#d4d4d4;"></div>
<div class="r" style="left:1025px;top:288px;width:1px;height:300px;background:#d4d4d4;"></div>
<div class="r" style="left:1105px;top:288px;width:1px;height:300px;background:#d4d4d4;"></div>
<div class="r" style="left:1185px;top:288px;width:1px;height:300px;background:#d4d4d4;"></div>
<div class="r" style="left:0px;top:311px;width:1261px;height:1px;background:#d4d4d4;"></div>
<div class="r" style="left:0px;top:335px;width:1261px;height:1px;background:#d4d4d4;"></div>
<div class="r" style="left:0px;top:359px;width:1261px;height:1px;background:#d4d4d4;"></div>
<div class="r" style="left:0px;top:383px;width:1261px;height:1px;background:#d4d4d4;"></div>
<div class="r" style="left:0px;top:407px;width:1261px;height:1px;background:#d4d4d4;"></div>
<div class="r" style="left:0px;top:431px;width:1261px;height:1px;background:#d4d4d4;"></div>
<div class="r" style="left:0px;top:455px;width:1261px;height:1px;background:#d4d4d4;"></div>
<div class="r" style="left:0px;top:479px;width:1261px;height:1px;background:#d4d4d4;"></div>
<div class="r" style="left:0px;top:503px;width:1261px;height:1px;background:#d4d4d4;"></div>
<div class="r" style="left:0px;top:527px;width:1261px;height:1px;background:#d4d4d4;"></div>
<div class="r" style="left:0px;top:551px;width:1261px;height:1px;background:#d4d4d4;"></div>
<div class="r" style="left:0px;top:575px;width:1261px;height:1px;background:#d4d4d4;"></div>
<div class="r" style="left:0px;top:599px;width:1261px;height:1px;background:#d4d4d4;"></div>
<div class="r" style="left:0px;top:287px;width:30px;height:1px;background:#d6d6d6;"></div>
<div class="r" style="left:30px;top:287px;width:1231px;height:1px;background:#a8a8a8;"></div>
<div class="r" style="left:30px;top:287px;width:1px;height:290px;background:#a0a0a0;"></div>
<svg class="r" style="left:11px;top:268px" width="17" height="16" viewBox="0 0 17 16"><path d="M16 0.5 V15.8 H0.4z" fill="#dedede"/></svg>
<span class="t" style="left:9.72px;top:290.00px;font-size:17.2px;color:#444;transform:scaleX(0.6750) skewX(0.05deg);">1</span>
<span class="t" style="left:9.80px;top:314.00px;font-size:17.2px;color:#444;transform:scaleX(0.8333) skewX(0.05deg);">2</span>
<span class="t" style="left:9.80px;top:338.00px;font-size:17.2px;color:#444;transform:scaleX(0.8333) skewX(0.05deg);">3</span>
<span class="t" style="left:9.80px;top:362.00px;font-size:17.2px;color:#444;transform:scaleX(0.8333) skewX(0.05deg);">4</span>
<span class="t" style="left:8.86px;top:386.00px;font-size:17.2px;color:#217346;transform:scaleX(0.9375) skewX(0.05deg);">5</span>
<span class="t" style="left:9.80px;top:410.00px;font-size:17.2px;color:#444;transform:scaleX(0.8333) skewX(0.05deg);">6</span>
<span class="t" style="left:9.80px;top:434.00px;font-size:17.2px;color:#444;transform:scaleX(0.8333) skewX(0.05deg);">7</span>
<span class="t" style="left:9.80px;top:458.00px;font-size:17.2px;color:#444;transform:scaleX(0.8333) skewX(0.05deg);">8</span>
<span class="t" style="left:9.80px;top:482.00px;font-size:17.2px;color:#444;transform:scaleX(0.8333) skewX(0.05deg);">9</span>
<span class="t" style="left:7.32px;top:506.00px;font-size:17.2px;color:#444;transform:scaleX(0.9833) skewX(0.05deg);">10</span>
<span class="t" style="left:7.19px;top:530.00px;font-size:17.2px;color:#444;transform:scaleX(1.1062) skewX(0.05deg);">11</span>
<span class="t" style="left:7.32px;top:554.00px;font-size:17.2px;color:#444;transform:scaleX(0.9833) skewX(0.05deg);">12</span>
<div class="r" style="left:772px;top:286px;width:94px;height:2px;background:#217346;"></div>
<div class="r" style="left:29px;top:383px;width:2px;height:25px;background:#217346;"></div>
<div class="r" style="left:111px;top:336px;width:456px;height:23px;background:#4472c4;"></div>
<div class="r" style="left:648px;top:336px;width:124px;height:95px;background:#4472c4;"></div>
<span class="t" style="left:113.84px;top:338.00px;font-size:16.1px;color:#fff;transform:scaleX(0.9634) skewX(0.05deg);font-weight:bold;">First Name</span>
<span class="t" style="left:201.81px;top:338.00px;font-size:16.1px;color:#fff;transform:scaleX(0.9863) skewX(0.05deg);font-weight:bold;">Date of Birth</span>
<span class="t" style="left:305.80px;top:338.00px;font-size:16.1px;color:#fff;transform:scaleX(0.9965) skewX(0.05deg);font-weight:bold;">Phone Number</span>
<span class="t" style="left:425.20px;top:338.00px;font-size:16.1px;color:#fff;transform:scaleX(0.9313) skewX(0.05deg);font-weight:bold;">Address</span>
<span class="t" style="left:491.20px;top:338.00px;font-size:16.1px;color:#fff;transform:scaleX(0.9500) skewX(0.05deg);font-weight:bold;">Salary</span>
<span class="t" style="left:114.05px;top:362.00px;font-size:16.1px;color:#000;transform:scaleX(0.9599) skewX(0.05deg);-webkit-text-stroke:0.2px #000;">John</span>
<span class="t" style="left:202.60px;top:362.00px;font-size:16.1px;color:#000;transform:scaleX(0.9858) skewX(0.05deg);-webkit-text-stroke:0.2px #000;">04-21-1987</span>
<span class="t" style="left:306.60px;top:362.00px;font-size:16.1px;color:#000;transform:scaleX(0.9868) skewX(0.05deg);-webkit-text-stroke:0.2px #000;">212-582-5841</span>
<span class="t" style="left:425.06px;top:362.00px;font-size:16.1px;color:#000;transform:scaleX(0.8401) skewX(0.05deg);-webkit-text-stroke:0.2px #000;">NYC</span>
<span class="t" style="left:491.60px;top:362.00px;font-size:16.1px;color:#000;transform:scaleX(0.9781) skewX(0.05deg);-webkit-text-stroke:0.2px #000;">$185,000</span>
<span class="t" style="left:114.05px;top:386.00px;font-size:16.1px;color:#000;transform:scaleX(0.9337) skewX(0.05deg);-webkit-text-stroke:0.2px #000;">Jamie</span>
<span class="t" style="left:202.10px;top:386.00px;font-size:16.1px;color:#000;transform:scaleX(1.0042) skewX(0.05deg);-webkit-text-stroke:0.2px #000;">11-01-1985</span>
<span class="t" style="left:306.60px;top:386.00px;font-size:16.1px;color:#000;transform:scaleX(0.9868) skewX(0.05deg);-webkit-text-stroke:0.2px #000;">212-589-5741</span>
<span class="t" style="left:425.06px;top:386.00px;font-size:16.1px;color:#000;transform:scaleX(0.8401) skewX(0.05deg);-webkit-text-stroke:0.2px #000;">NYC</span>
<span class="t" style="left:491.60px;top:386.00px;font-size:16.1px;color:#000;transform:scaleX(0.9781) skewX(0.05deg);-webkit-text-stroke:0.2px #000;">$190,000</span>
<span class="t" style="left:114.05px;top:410.00px;font-size:16.1px;color:#000;transform:scaleX(0.9033) skewX(0.05deg);-webkit-text-stroke:0.2px #000;">JOHN</span>
<span class="t" style="left:202.60px;top:410.00px;font-size:16.1px;color:#000;transform:scaleX(0.9858) skewX(0.05deg);-webkit-text-stroke:0.2px #000;">06-24-1991</span>
<span class="t" style="left:306.60px;top:410.00px;font-size:16.1px;color:#000;transform:scaleX(0.9868) skewX(0.05deg);-webkit-text-stroke:0.2px #000;">212-587-5982</span>
<span class="t" style="left:424.89px;top:410.00px;font-size:16.1px;color:#000;transform:scaleX(1.0146) skewX(0.05deg);-webkit-text-stroke:0.2px #000;">Buffalo</span>
<span class="t" style="left:491.60px;top:410.00px;font-size:16.1px;color:#000;transform:scaleX(0.9781) skewX(0.05deg);-webkit-text-stroke:0.2px #000;">$144,000</span>
<span class="t" style="left:114.05px;top:434.00px;font-size:16.1px;color:#000;transform:scaleX(0.9131) skewX(0.05deg);-webkit-text-stroke:0.2px #000;">Jacob</span>
<span class="t" style="left:202.60px;top:434.00px;font-size:16.1px;color:#000;transform:scaleX(0.9858) skewX(0.05deg);-webkit-text-stroke:0.2px #000;">06-17-1975</span>
<span class="t" style="left:306.60px;top:434.00px;font-size:16.1px;color:#000;transform:scaleX(0.9868) skewX(0.05deg);-webkit-text-stroke:0.2px #000;">213-569-5847</span>
<span class="t" style="left:425.10px;top:434.00px;font-size:16.1px;color:#000;transform:scaleX(0.9663) skewX(0.05deg);-webkit-text-stroke:0.2px #000;">Albany</span>
<span class="t" style="left:491.60px;top:434.00px;font-size:16.1px;color:#000;transform:scaleX(0.9781) skewX(0.05deg);-webkit-text-stroke:0.2px #000;">$285,000</span>
<span class="t" style="left:113.88px;top:458.00px;font-size:16.1px;color:#000;transform:scaleX(1.0202) skewX(0.05deg);-webkit-text-stroke:0.2px #000;">Nathan</span>
<span class="t" style="left:202.11px;top:458.00px;font-size:16.1px;color:#000;transform:scaleX(0.9918) skewX(0.05deg);-webkit-text-stroke:0.2px #000;">10-12-1970</span>
<span class="t" style="left:306.60px;top:458.00px;font-size:16.1px;color:#000;transform:scaleX(0.9868) skewX(0.05deg);-webkit-text-stroke:0.2px #000;">212-254-8571</span>
<span class="t" style="left:424.89px;top:458.00px;font-size:16.1px;color:#000;transform:scaleX(1.0146) skewX(0.05deg);-webkit-text-stroke:0.2px #000;">Buffalo</span>
<span class="t" style="left:491.60px;top:458.00px;font-size:16.1px;color:#000;transform:scaleX(0.9781) skewX(0.05deg);-webkit-text-stroke:0.2px #000;">$300,210</span>
<span class="t" style="left:113.91px;top:482.00px;font-size:16.1px;color:#000;transform:scaleX(0.9941) skewX(0.05deg);-webkit-text-stroke:0.2px #000;">Daniel</span>
<span class="t" style="left:202.60px;top:482.00px;font-size:16.1px;color:#000;transform:scaleX(0.9980) skewX(0.05deg);-webkit-text-stroke:0.2px #000;">01-11-1988</span>
<span class="t" style="left:306.60px;top:482.00px;font-size:16.1px;color:#000;transform:scaleX(0.9868) skewX(0.05deg);-webkit-text-stroke:0.2px #000;">212-569-5147</span>
<span class="t" style="left:425.10px;top:482.00px;font-size:16.1px;color:#000;transform:scaleX(0.9663) skewX(0.05deg);-webkit-text-stroke:0.2px #000;">Albany</span>
<span class="t" style="left:491.60px;top:482.00px;font-size:16.1px;color:#000;transform:scaleX(0.9781) skewX(0.05deg);-webkit-text-stroke:0.2px #000;">$188,000</span>
<span class="t" style="left:113.90px;top:506.00px;font-size:16.1px;color:#000;transform:scaleX(0.9953) skewX(0.05deg);-webkit-text-stroke:0.2px #000;">Ethan</span>
<span class="t" style="left:202.10px;top:506.00px;font-size:16.1px;color:#000;transform:scaleX(1.0042) skewX(0.05deg);-webkit-text-stroke:0.2px #000;">10-11-1990</span>
<span class="t" style="left:306.60px;top:506.00px;font-size:16.1px;color:#000;transform:scaleX(0.9868) skewX(0.05deg);-webkit-text-stroke:0.2px #000;">212-589-2317</span>
<span class="t" style="left:425.10px;top:506.00px;font-size:16.1px;color:#000;transform:scaleX(0.9663) skewX(0.05deg);-webkit-text-stroke:0.2px #000;">Albany</span>
<span class="t" style="left:491.60px;top:506.00px;font-size:16.1px;color:#000;transform:scaleX(0.9781) skewX(0.05deg);-webkit-text-stroke:0.2px #000;">$189,580</span>
<span class="t" style="left:650.84px;top:338.00px;font-size:16.1px;color:#fff;transform:scaleX(0.9634) skewX(0.05deg);font-weight:bold;">First Name</span>
<span class="t" style="left:650.81px;top:362.00px;font-size:16.1px;color:#fff;transform:scaleX(0.9863) skewX(0.05deg);font-weight:bold;">Date of Birth</span>
<span class="t" style="left:650.80px;top:386.00px;font-size:16.1px;color:#fff;transform:scaleX(0.9965) skewX(0.05deg);font-weight:bold;">Phone Number</span>
<span class="t" style="left:651.20px;top:410.00px;font-size:16.1px;color:#fff;transform:scaleX(0.9500) skewX(0.05deg);font-weight:bold;">Salary</span>
<span class="t" style="left:776.05px;top:338.00px;font-size:16.1px;color:#000;transform:scaleX(0.9033) skewX(0.05deg);-webkit-text-stroke:0.2px #000;">JOHN</span>
<span class="t" style="left:776.60px;top:362.00px;font-size:16.1px;color:#000;transform:scaleX(0.9858) skewX(0.05deg);-webkit-text-stroke:0.2px #000;">04-21-1987</span>
<div class="r" style="left:110px;top:335px;width:1px;height:192px;background:#000;"></div>
<div class="r" style="left:198px;top:335px;width:1px;height:192px;background:#000;"></div>
<div class="r" style="left:302px;top:335px;width:1px;height:192px;background:#000;"></div>
<div class="r" style="left:421px;top:335px;width:1px;height:192px;background:#000;"></div>
<div class="r" style="left:487px;top:335px;width:1px;height:192px;background:#000;"></div>
<div class="r" style="left:567px;top:335px;width:1px;height:192px;background:#000;"></div>
<div class="r" style="left:110px;top:335px;width:458px;height:1px;background:#000;"></div>
<div class="r" style="left:110px;top:359px;width:458px;height:1px;background:#000;"></div>
<div class="r" style="left:110px;top:527px;width:458px;height:1px;background:#000;"></div>
<div class="r" style="left:647px;top:335px;width:1px;height:73px;background:#000;"></div>
<div class="r" style="left:772px;top:335px;width:1px;height:73px;background:#000;"></div>
<div class="r" style="left:647px;top:335px;width:126px;height:1px;background:#000;"></div>
<div class="r" style="left:647px;top:359px;width:126px;height:1px;background:#000;"></div>
<div class="r" style="left:647px;top:383px;width:126px;height:1px;background:#000;"></div>
<div class="r" style="left:647px;top:407px;width:126px;height:1px;background:#000;"></div>
<div class="r" style="left:773px;top:384px;width:92px;height:23px;background:#fff;"></div>
<span class="t" style="left:776.60px;top:386.00px;font-size:16.1px;color:#000;transform:scaleX(0.9868) skewX(0.05deg);-webkit-text-stroke:0.2px #000;">212-587-5982</span>
<div class="r" style="left:771px;top:382px;width:96px;height:2px;background:#217346;"></div>
<div class="r" style="left:771px;top:407px;width:91px;height:2px;background:#217346;"></div>
<div class="r" style="left:771px;top:382px;width:2px;height:27px;background:#217346;"></div>
<div class="r" style="left:865px;top:382px;width:2px;height:22px;background:#217346;"></div>
<div class="r" style="left:862px;top:404px;width:6px;height:6px;background:#fff;"></div>
<div class="r" style="left:863px;top:405px;width:5px;height:5px;background:#217346;"></div>
</div></body></html>
